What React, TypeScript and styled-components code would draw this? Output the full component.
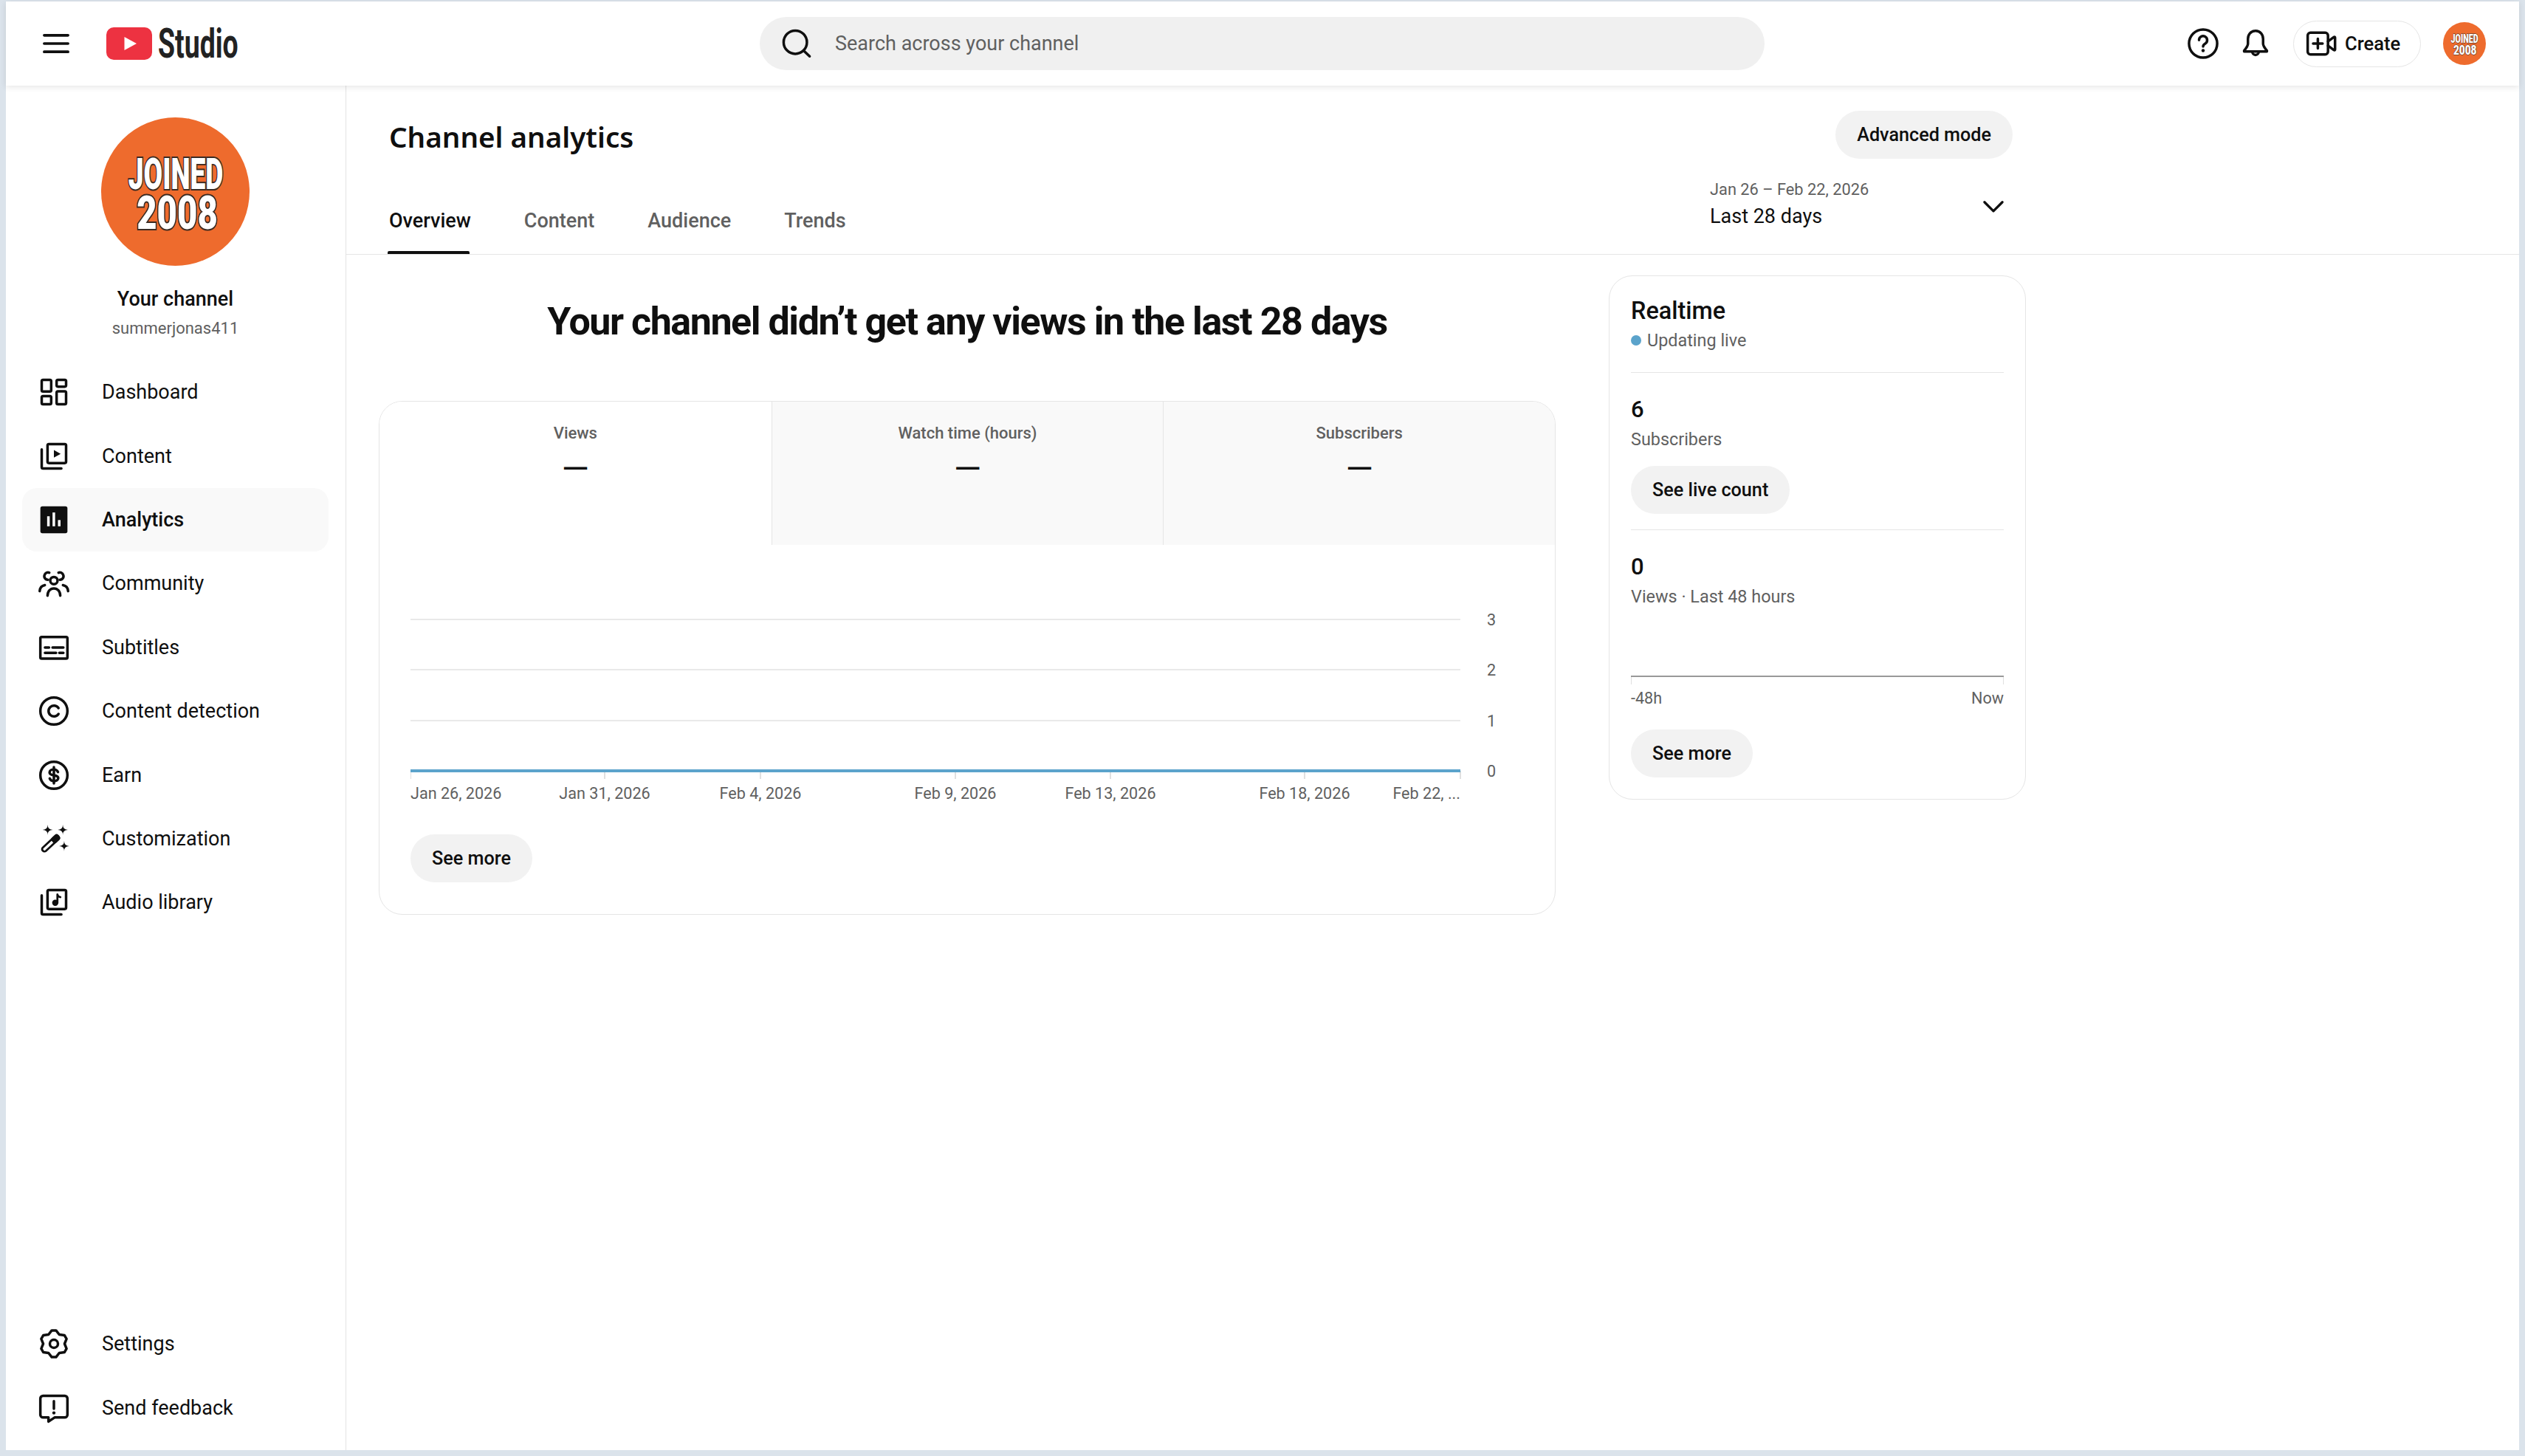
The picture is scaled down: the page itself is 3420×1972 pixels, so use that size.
import React from 'react';
import styled, { createGlobalStyle } from 'styled-components';

const GlobalStyle = createGlobalStyle`
  * { box-sizing: border-box; }
  html, body { margin: 0; height: 100%; }
  body {
    padding: 2px 8px 8px;
    background: #dbe3eb;
    font-family: Roboto, "Liberation Sans", sans-serif;
    color: #0f0f0f;
    overflow: hidden;
  }
`;

const Shell = styled.div`
  width: 3404px;
  height: 1962px;
  background: #fff;
  display: flex;
  flex-direction: column;
`;

const TopBar = styled.header`
  height: 114px;
  flex: none;
  display: grid;
  grid-template-columns: 1021px 1361px 1fr;
  align-items: center;
  background: #fff;
  box-shadow: 0 2px 8px rgba(0, 0, 0, 0.1);
  position: relative;
  z-index: 2;
`;

const BrandArea = styled.div`
  display: flex;
  align-items: center;
  padding-left: 46px;
`;

const LogoLink = styled.div`
  display: flex;
  align-items: center;
  margin-left: 46px;
`;

const LogoText = styled.span`
  display: inline-block;
  font-size: 55px;
  line-height: 60px;
  font-weight: 700;
  color: #222;
  width: 106px;
  margin-left: 8px;
  transform: scaleX(0.68);
  transform-origin: left center;
  white-space: nowrap;
`;

const SearchBox = styled.div`
  height: 72px;
  border-radius: 36px;
  background: #f0f0f0;
  display: flex;
  align-items: center;
  gap: 30px;
  padding-left: 28px;
  font-size: 27px;
  color: #606060;
`;

const TopActions = styled.div`
  display: flex;
  align-items: center;
  justify-content: flex-end;
  padding-right: 45px;
`;

const BellSlot = styled.div`
  margin-left: 27px;
  display: flex;
`;

const CreateButton = styled.div`
  height: 63px;
  width: 173px;
  margin: 0 30px 0 29px;
  border: 1.5px solid #e5e5e5;
  border-radius: 32px;
  display: flex;
  align-items: center;
  gap: 10px;
  padding-left: 15px;
  font-size: 25.6px;
  font-weight: 500;
`;

const IconSvg = styled.svg.attrs({ viewBox: '0 0 24 24' })`
  width: 44px;
  height: 44px;
  flex: none;
  fill: none;
  stroke: #0f0f0f;
  stroke-width: 1.9;
  stroke-linecap: round;
  stroke-linejoin: round;
  .solid { fill: #0f0f0f; stroke: none; }
  .cut { fill: #fff; stroke: none; }
`;

const BadgeSvg = styled.svg.attrs({ viewBox: '0 0 201 201' })<{ $size: number }>`
  width: ${(p) => p.$size}px;
  height: ${(p) => p.$size}px;
  flex: none;
  display: block;
  text {
    font-family: Roboto, "Liberation Sans", sans-serif;
    font-weight: 900;
    fill: #fff;
    stroke: #3a2a22;
    stroke-width: 4px;
    paint-order: stroke fill;
    text-anchor: middle;
  }
`;

const Columns = styled.div`
  flex: 1;
  min-height: 0;
  display: flex;
`;

const Sidebar = styled.aside`
  width: 461px;
  flex: none;
  border-right: 1px solid #e3e3e3;
  padding: 43px 23px 14px 22px;
  display: flex;
  flex-direction: column;
`;

const ChannelBlock = styled.div`
  display: flex;
  flex-direction: column;
  align-items: center;
  margin-bottom: 28px;
`;

const ChannelName = styled.div`
  margin-top: 29px;
  font-size: 27px;
  line-height: 32px;
  font-weight: 500;
`;

const ChannelHandle = styled.div`
  margin-top: 9px;
  font-size: 22px;
  line-height: 30px;
  color: #606060;
`;

const NavList = styled.nav<{ $bottom?: boolean }>`
  display: flex;
  flex-direction: column;
  margin-top: ${(p) => (p.$bottom ? 'auto' : '0')};
`;

const NavRow = styled.div<{ $active?: boolean }>`
  height: 86.4px;
  display: flex;
  align-items: center;
  gap: 43px;
  padding-left: 21px;
  border-radius: 20px;
  font-size: 27px;
  font-weight: ${(p) => (p.$active ? 500 : 400)};
  background: ${(p) => (p.$active ? '#f9f9f9' : 'transparent')};
`;

const Main = styled.main`
  flex: 1;
  min-width: 0;
  display: flex;
  flex-direction: column;
`;

const PageHead = styled.div`
  height: 229px;
  flex: none;
  border-bottom: 1px solid #e5e5e5;
  padding: 0 686px 0 58px;
  display: flex;
  justify-content: space-between;
`;

const HeadLeft = styled.div`
  display: flex;
  flex-direction: column;
  padding-top: 44px;
`;

const PageTitle = styled.h1`
  margin: 0;
  font-family: "Noto Sans", Roboto, sans-serif;
  font-size: 38.6px;
  line-height: 50px;
  font-weight: 600;
`;

const TabRow = styled.div`
  display: flex;
  gap: 72px;
  margin-top: auto;
`;

const Tab = styled.div<{ $active?: boolean }>`
  position: relative;
  font-size: 27px;
  line-height: 30px;
  font-weight: 500;
  padding-bottom: 30px;
  color: ${(p) => (p.$active ? '#0f0f0f' : '#606060')};
  ${(p) =>
    p.$active &&
    `&::after {
      content: '';
      position: absolute;
      left: -2px;
      right: 2px;
      bottom: 0;
      height: 4px;
      border-radius: 2px 2px 0 0;
      background: #0f0f0f;
    }`}
`;

const HeadRight = styled.div`
  width: 410px;
  padding-top: 34px;
  display: flex;
  flex-direction: column;
  align-items: flex-end;
`;

const PillButton = styled.div`
  height: 65px;
  display: inline-flex;
  align-items: center;
  align-self: flex-start;
  padding: 0 29px;
  border-radius: 33px;
  background: #f2f2f2;
  font-size: 25.2px;
  font-weight: 500;
  white-space: nowrap;
`;

const AdvancedButton = styled(PillButton)`
  align-self: flex-end;
`;

const DateSelect = styled.div`
  width: 100%;
  margin-top: 27px;
  padding-right: 4px;
  display: flex;
  align-items: center;
  justify-content: space-between;
`;

const DateRange = styled.div`
  font-size: 21.8px;
  line-height: 30px;
  color: #606060;
`;

const DateLabel = styled.div`
  margin-top: 4px;
  font-size: 27px;
  line-height: 34px;
`;

const Chevron = styled(IconSvg)`
  margin-top: 8px;
  stroke-width: 1.8;
`;

const Content = styled.div`
  flex: 1;
  display: flex;
  align-items: flex-start;
  gap: 72px;
  padding: 28px 0 0 44px;
`;

const Overview = styled.section`
  width: 1594px;
  flex: none;
`;

const Headline = styled.h2`
  margin: 33px 0 77px;
  text-align: center;
  font-size: 52px;
  line-height: 60px;
  font-weight: 700;
  letter-spacing: -1.45px;
`;

const Card = styled.div`
  border: 1px solid #e5e5e5;
  border-radius: 32px;
  overflow: hidden;
  background: #fff;
`;

const MetricRow = styled.div`
  display: grid;
  grid-template-columns: repeat(3, 1fr);
  height: 194px;
`;

const Metric = styled.div<{ $active?: boolean }>`
  padding-top: 29px;
  text-align: center;
  background: ${(p) => (p.$active ? '#fff' : '#f9f9f9')};
  border-left: ${(p) => (p.$active ? 'none' : '1px solid #e5e5e5')};
`;

const MetricLabel = styled.div`
  font-size: 22px;
  line-height: 28px;
  font-weight: 500;
  color: #606060;
`;

const MetricValue = styled.div`
  margin-top: 16px;
  font-size: 48px;
  line-height: 36px;
  font-weight: 400;
`;

const ChartArea = styled.div`
  padding: 82px 0 43px 42px;
`;

const ChartSvg = styled.svg`
  display: block;
  margin-bottom: 35px;
  text {
    font-family: Roboto, "Liberation Sans", sans-serif;
    font-size: 21.6px;
    fill: #606060;
  }
`;

const RealtimeCard = styled(Card)`
  width: 565px;
  flex: none;
  padding: 27px 29px 29px;
`;

const RealtimeTitle = styled.div`
  font-size: 32.4px;
  line-height: 40px;
  font-weight: 500;
`;

const LiveRow = styled.div`
  margin-top: 5px;
  display: flex;
  align-items: center;
  gap: 8px;
  font-size: 23.4px;
  line-height: 30px;
  color: #606060;
`;

const LiveDot = styled.span`
  width: 14px;
  height: 14px;
  border-radius: 50%;
  background: #5ba3cb;
`;

const Section = styled.div<{ $top: number }>`
  margin-top: ${(p) => p.$top}px;
  padding-top: 30px;
  border-top: 1px solid #e5e5e5;
  display: flex;
  flex-direction: column;
`;

const StatValue = styled.div`
  font-size: 31px;
  line-height: 40px;
  font-weight: 500;
`;

const StatLabel = styled.div`
  margin-top: 5px;
  font-size: 23.4px;
  line-height: 30px;
  color: #606060;
`;

const ActionSlot = styled.div<{ $top: number }>`
  margin-top: ${(p) => p.$top}px;
`;

const AxisSvg = styled.svg`
  display: block;
  margin-top: 92px;
`;

const AxisLabels = styled.div`
  margin-top: 5px;
  display: flex;
  justify-content: space-between;
  font-size: 21.6px;
  line-height: 28px;
  color: #606060;
`;

const Avatar = ({ size }: { size: number }) => (
  <BadgeSvg $size={size}>
    <circle cx="100.5" cy="100.5" r="100.5" fill="#ee6b2d" />
    <text transform="translate(101 97) scale(0.63 1)" fontSize="59">JOINED</text>
    <text transform="translate(103 151) scale(0.75 1)" fontSize="63">2008</text>
  </BadgeSvg>
);

// six teeth, each with a flat top, joined by shallow valleys
const gearPath = () => {
  const pts: string[] = [];
  const at = (deg: number, r: number) => {
    const a = (deg * Math.PI) / 180;
    return `${(12 + r * Math.cos(a)).toFixed(2)} ${(12 + r * Math.sin(a)).toFixed(2)}`;
  };
  for (let i = 0; i < 6; i++) {
    const mid = -90 + i * 60;
    pts.push(at(mid - 9, 10), at(mid + 9, 10), at(mid + 30, 7.9));
  }
  return `M${pts.join('L')}Z`;
};

const star = (x: number, y: number, r: number) =>
  `M${x} ${y - r}Q${x} ${y} ${x + r} ${y}Q${x} ${y} ${x} ${y + r}Q${x} ${y} ${x - r} ${y}Q${x} ${y} ${x} ${y - r}Z`;

const icons: Record<string, React.ReactNode> = {
  dashboard: (
    <>
      <rect x="3" y="3" width="7" height="8.6" rx="1" />
      <rect x="3" y="15" width="7" height="6" rx="1" />
      <rect x="14" y="3" width="7" height="5" rx="1" />
      <rect x="14" y="11.5" width="7" height="9.5" rx="1" />
    </>
  ),
  content: (
    <>
      <rect x="7.3" y="3" width="13.7" height="14" rx="1" />
      <path d="M3 7v13a1 1 0 0 0 1 1h13.5" />
      <path className="solid" d="M12 7.4 17 10.2 12 13Z" />
    </>
  ),
  analytics: (
    <>
      <rect className="solid" x="2" y="2" width="20" height="20" rx="1.5" />
      <rect className="cut" x="7" y="9.4" width="1.9" height="7.4" />
      <rect className="cut" x="11" y="6.6" width="1.9" height="10.2" />
      <rect className="cut" x="15" y="12.2" width="1.9" height="4.6" />
    </>
  ),
  community: (
    <>
      <circle cx="12" cy="10" r="2.7" />
      <path d="M7.3 21.2c0-3.2 2-5.4 4.7-5.4s4.7 2.2 4.7 5.4" />
      <path d="M7.6 9.4A2.6 2.6 0 0 1 5.2 5.6 2.6 2.6 0 0 1 8.6 4.2" />
      <path d="M16.4 9.4a2.6 2.6 0 0 0 2.4-3.8 2.6 2.6 0 0 0-3.4-1.4" />
      <path d="M1.5 17.8c.2-2.4 1.6-4 3.8-4.4" />
      <path d="M22.5 17.8c-.2-2.4-1.6-4-3.8-4.4" />
    </>
  ),
  subtitles: (
    <>
      <rect x="2" y="4.2" width="20" height="16" rx="1" />
      <path d="M5.4 12h3M11 12h8M5.4 16h8.2M16 16h3" />
    </>
  ),
  copyright: (
    <>
      <circle cx="12" cy="12" r="10" />
      <path d="M15.4 9.8a4 4 0 1 0 0 4.4" />
    </>
  ),
  earn: (
    <>
      <circle cx="12" cy="12" r="10" />
      <path d="M15 9.6c-.5-1.2-1.7-1.9-3-1.9-1.8 0-3.2.9-3.2 2.2 0 3 6.4 1.3 6.4 4.2 0 1.3-1.4 2.2-3.2 2.2-1.4 0-2.6-.7-3.1-1.9M12 6v12" />
    </>
  ),
  wand: (
    <>
      <path className="solid" d={star(7.4, 5.4, 3.7)} />
      <path className="solid" d={star(18.6, 5.4, 3.7)} />
      <path className="solid" d={star(19.6, 17.4, 3.7)} />
      <g transform="rotate(-43 9.5 15.5)">
        <rect x="1.7" y="13.8" width="15.6" height="3.4" rx="1.6" strokeWidth="1.5" />
        <rect className="solid" x="11.4" y="13" width="6.6" height="5" rx="1.8" />
      </g>
    </>
  ),
  audio: (
    <>
      <rect x="7.3" y="3" width="13.7" height="14" rx="1" />
      <path d="M3 7v13a1 1 0 0 0 1 1h13.5" />
      <circle className="solid" cx="13" cy="12.4" r="2.3" />
      <path d="M14.6 12.4V6.2c.2 1.2 1 1.8 2.2 2" strokeWidth="1.5" />
    </>
  ),
  settings: (
    <>
      <path d={gearPath()} />
      <circle cx="12" cy="12" r="3" />
    </>
  ),
  feedback: (
    <>
      <path d="M4 3h16a2 2 0 0 1 2 2v12a2 2 0 0 1-2 2h-7.5L8 22v-3H4a2 2 0 0 1-2-2V5a2 2 0 0 1 2-2Z" />
      <path d="M12 7v5.6" />
      <circle className="solid" cx="12" cy="15.6" r="1.2" />
    </>
  ),
};

const mainNav = [
  { icon: 'dashboard', label: 'Dashboard' },
  { icon: 'content', label: 'Content' },
  { icon: 'analytics', label: 'Analytics', active: true },
  { icon: 'community', label: 'Community' },
  { icon: 'subtitles', label: 'Subtitles' },
  { icon: 'copyright', label: 'Content detection' },
  { icon: 'earn', label: 'Earn' },
  { icon: 'wand', label: 'Customization' },
  { icon: 'audio', label: 'Audio library' },
];

const footerNav = [
  { icon: 'settings', label: 'Settings' },
  { icon: 'feedback', label: 'Send feedback' },
];

const gridLines = [
  { y: 19, label: '3' },
  { y: 87, label: '2' },
  { y: 156, label: '1' },
];

const xTicks = [
  { x: 263, label: 'Jan 31, 2026' },
  { x: 474, label: 'Feb 4, 2026' },
  { x: 738, label: 'Feb 9, 2026' },
  { x: 948, label: 'Feb 13, 2026' },
  { x: 1211, label: 'Feb 18, 2026' },
];

const Chart = () => (
  <ChartSvg width="1500" height="275" viewBox="0 0 1500 275">
    {gridLines.map((g) => (
      <g key={g.y}>
        <line x1="0" x2="1422" y1={g.y} y2={g.y} stroke="#e9e9e9" strokeWidth="2" />
        <text x="1464" y={g.y + 8} textAnchor="middle">{g.label}</text>
      </g>
    ))}
    {[0, ...xTicks.map((t) => t.x), 1422].map((x) => (
      <line key={x} x1={x} x2={x} y1="224" y2="235" stroke="#e0e0e0" strokeWidth="2" />
    ))}
    <line x1="0" x2="1422" y1="224" y2="224" stroke="#5ba3cb" strokeWidth="4" />
    <text x="1464" y="232" textAnchor="middle">0</text>
    <text x="0" y="262">Jan 26, 2026</text>
    {xTicks.map((t) => (
      <text key={t.x} x={t.x} y="262" textAnchor="middle">{t.label}</text>
    ))}
    <text x="1422" y="262" textAnchor="end">Feb 22, ...</text>
  </ChartSvg>
);

export default function App() {
  return (
    <>
      <GlobalStyle />
      <Shell>
        <TopBar>
          <BrandArea>
            <IconSvg>
              <path d="M3.2 5.9h17.6M3.2 12h17.6M3.2 18.1h17.6" strokeWidth="2" />
            </IconSvg>
            <LogoLink>
              <svg width="62" height="44" viewBox="0 0 62 44">
                <rect width="62" height="44" rx="10" fill="#ed3241" />
                <path d="M24.5 13 41 22 24.5 31Z" fill="#fff" />
              </svg>
              <LogoText>Studio</LogoText>
            </LogoLink>
          </BrandArea>
          <SearchBox>
            <IconSvg>
              <circle cx="11" cy="11" r="8.6" />
              <path d="M17.4 17.4 21.6 21.4" />
            </IconSvg>
            Search across your channel
          </SearchBox>
          <TopActions>
            <IconSvg>
              <circle cx="12" cy="12" r="10.4" />
              <path d="M9 9.4a3 3 0 1 1 4.6 2.6c-1 .6-1.6 1.2-1.6 2.2" />
              <circle className="solid" cx="12" cy="17.2" r="1.2" />
            </IconSvg>
            <BellSlot>
              <IconSvg>
                <path d="M12 2.6c-3.6 0-5.6 2.8-5.6 6v3.6c0 1.8-1.2 3.2-2.8 5v.6h16.8v-.6c-1.6-1.8-2.8-3.2-2.8-5V8.6c0-3.2-2-6-5.6-6Z" />
                <path d="M9.6 18a2.4 2.4 0 0 0 4.8 0" />
              </IconSvg>
            </BellSlot>
            <CreateButton>
              <IconSvg>
                <rect x="2" y="4" width="15" height="16" rx="2" />
                <path d="M17 10.4 21.4 7.2c.4-.2.8 0 .8.4v8.8c0 .4-.4.6-.8.4L17 13.6" />
                <path d="M9.5 8.4v7.2M6 12h7" />
              </IconSvg>
              Create
            </CreateButton>
            <Avatar size={58} />
          </TopActions>
        </TopBar>
        <Columns>
          <Sidebar>
            <ChannelBlock>
              <Avatar size={201} />
              <ChannelName>Your channel</ChannelName>
              <ChannelHandle>summerjonas411</ChannelHandle>
            </ChannelBlock>
            <NavList>
              {mainNav.map((item) => (
                <NavRow key={item.label} $active={item.active}>
                  <IconSvg>{icons[item.icon]}</IconSvg>
                  {item.label}
                </NavRow>
              ))}
            </NavList>
            <NavList $bottom>
              {footerNav.map((item) => (
                <NavRow key={item.label}>
                  <IconSvg>{icons[item.icon]}</IconSvg>
                  {item.label}
                </NavRow>
              ))}
            </NavList>
          </Sidebar>
          <Main>
            <PageHead>
              <HeadLeft>
                <PageTitle>Channel analytics</PageTitle>
                <TabRow>
                  <Tab $active>Overview</Tab>
                  <Tab>Content</Tab>
                  <Tab>Audience</Tab>
                  <Tab>Trends</Tab>
                </TabRow>
              </HeadLeft>
              <HeadRight>
                <AdvancedButton>Advanced mode</AdvancedButton>
                <DateSelect>
                  <div>
                    <DateRange>Jan 26 – Feb 22, 2026</DateRange>
                    <DateLabel>Last 28 days</DateLabel>
                  </div>
                  <Chevron>
                    <path d="M5.4 8.6 12 15.2 18.6 8.6" />
                  </Chevron>
                </DateSelect>
              </HeadRight>
            </PageHead>
            <Content>
              <Overview>
                <Headline>Your channel didn’t get any views in the last 28 days</Headline>
                <Card>
                  <MetricRow>
                    <Metric $active>
                      <MetricLabel>Views</MetricLabel>
                      <MetricValue>—</MetricValue>
                    </Metric>
                    <Metric>
                      <MetricLabel>Watch time (hours)</MetricLabel>
                      <MetricValue>—</MetricValue>
                    </Metric>
                    <Metric>
                      <MetricLabel>Subscribers</MetricLabel>
                      <MetricValue>—</MetricValue>
                    </Metric>
                  </MetricRow>
                  <ChartArea>
                    <Chart />
                    <PillButton>See more</PillButton>
                  </ChartArea>
                </Card>
              </Overview>
              <RealtimeCard>
                <RealtimeTitle>Realtime</RealtimeTitle>
                <LiveRow>
                  <LiveDot />
                  Updating live
                </LiveRow>
                <Section $top={28}>
                  <StatValue>6</StatValue>
                  <StatLabel>Subscribers</StatLabel>
                  <ActionSlot $top={21}>
                    <PillButton>See live count</PillButton>
                  </ActionSlot>
                </Section>
                <Section $top={21}>
                  <StatValue>0</StatValue>
                  <StatLabel>Views · Last 48 hours</StatLabel>
                  <AxisSvg width="505" height="12" viewBox="0 0 505 12">
                    <line x1="0.5" x2="0.5" y1="0" y2="12" stroke="#e0e0e0" />
                    <line x1="504.5" x2="504.5" y1="0" y2="12" stroke="#e0e0e0" />
                    <line x1="0" x2="505" y1="1" y2="1" stroke="#999" strokeWidth="2" />
                  </AxisSvg>
                  <AxisLabels>
                    <span>-48h</span>
                    <span>Now</span>
                  </AxisLabels>
                  <ActionSlot $top={28}>
                    <PillButton>See more</PillButton>
                  </ActionSlot>
                </Section>
              </RealtimeCard>
            </Content>
          </Main>
        </Columns>
      </Shell>
    </>
  );
}
